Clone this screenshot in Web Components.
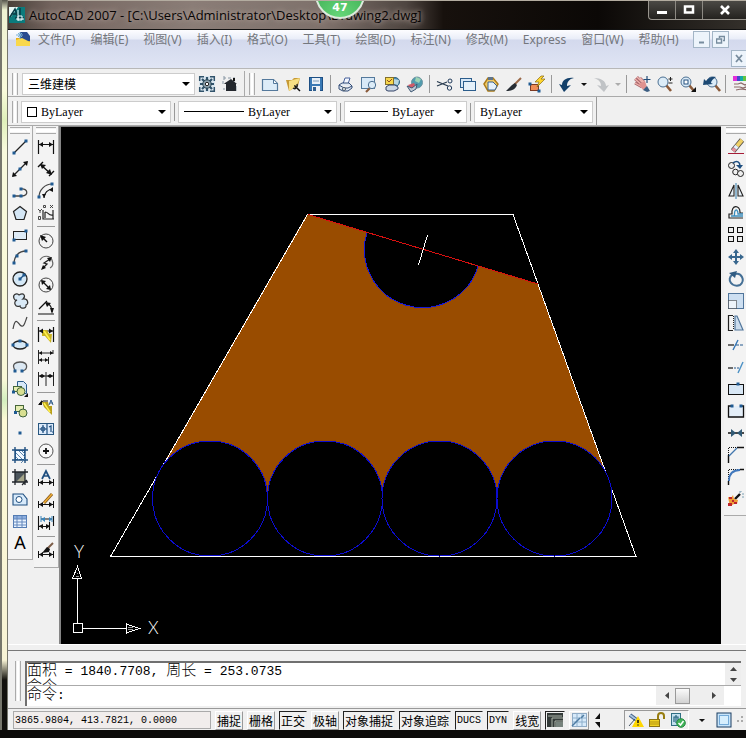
<!DOCTYPE html>
<html lang="zh-CN">
<head>
<meta charset="utf-8">
<title>AutoCAD 2007</title>
<style>
html,body{margin:0;height:100%;overflow:hidden}
body{font:12px "Liberation Sans","Noto Sans CJK SC",sans-serif;color:#000;background:#0b0a08}
</style>
</head>
<body>
<cad-window></cad-window>
<script>
const P = (d, s = '#111', w = 1, f = 'none') => `<path d="${d}" stroke="${s}" stroke-width="${w}" fill="${f}"/>`;
const F = (d, f = '#111') => `<path d="${d}" fill="${f}"/>`;
const R = (x, y, w, h, f = '#d7e8f8', s = '#2b5d8c') => `<rect x="${x}" y="${y}" width="${w}" height="${h}" fill="${f}" stroke="${s}"/>`;
const C = (x, y, r, f = '#d7e8f8', s = '#222') => `<circle cx="${x}" cy="${y}" r="${r}" fill="${f}" stroke="${s}"/>`;
const N = (...a) => { let o = ''; for (let i = 0; i < a.length; i += 2) o += `<rect x="${a[i] - 1.5}" y="${a[i + 1] - 1.5}" width="3" height="3" fill="#1f5a92"/>`; return o; };
const B = '#1f4f80';
const DIM = P('M.5 8v7M15.5 8v7M1 11.5h14') + F('M1 11.5l4-2.5v5zM15 11.5l-4-2.5v5z');
const LENS = (x, y) => P(`M${x + 3} ${y + 3}l5 6`, '#8a5a3a', 2.6) + C(x, y, 5, '#dcecf8', '#4b6f92');
const ICONS = {
  app: `<rect width="16" height="16" fill="#0b7b7c"/>` + F('M0 0h9L2 10 0 9z', '#e5f5f3') + P('M1 10L6 2l3 9M2 7h5M11 1v12M6 11h9', '#073d46', 1.5) + P('M9 3v11M7 12h8M9 9h4v4H9z', '#eefcff', 1),
  doc: F('M1 7h14v8H1z', '#e8af19') + F('M5 1h7l3 4v5L5 13z', '#2a4c8f') + F('M1 9l6-2 8 4v4H1z', '#f9d84c') + P('M5 1v7M1 4h7M3 2l4 4M7 2L3 6', '#7bb1d5'),
  gear: `<rect width="16" height="16" fill="#dbe7ef"/>` + P('M.7 5V.7H5M11 .7h4.300V5M15.300 11v4.300H11M5 15.300H.7V11', '#31536b', 1.5) + P('M3 3l10 10M13 3L3 13M8 1v14M1 8h14', '#31536b', 2.2) + C(8, 8, 4.2, '#8ea3af', '#23404f') + C(8, 8, 1.7, '#fff'),
  house: P('M2 2h2M6 2h3M12 1v5M1 5v3M14 10v5M1 13h2M2 0v4', '#8695a2') + F('M3 7l6-4 6 5h-1v7H4V8H2z', '#23272d') + F('M11 2h2v3h-2z', '#111'),
  newf: P('M.5 3.500h11l4 4v7H.5z', '#54799c', 1.2, '#ddecf8') + P('M11.500 4v3.500H15', '#54799c', 1, '#fff'),
  open: F('M1 4h6l2-2h6l-2 8-9 5z', '#c79a35') + F('M4 5l11-3-4 9-7 4z', '#f7df83') + P('M8 12c3 2 5-1 4-4', '#222', 1.5) + F('M9 9l3 1-2 3z') + P('M12 12l3 3', '#111', 1.5),
  save: R(1.5, 1.5, 13, 13, '#3979b5', '#1d4f84') + F('M4 2h8v6H4z', '#e7eff7') + F('M4 10h8v5H4z', '#eef2f6') + F('M5 11h3v4H5z', '#315f8f') + P('M5 5h6', '#7f9cb8'),
  print: P('M5 8L7 2h5l-2 6', '#46619b', 1, '#f5f8ff') + P('M1 9l3-2h7l3 3v2l-4 3H5l-4-2zM1 9l5 3h4l4-2', '#334d77', 1, '#dfe7f2') + C(6, 13, 1.5, '#fff', '#456'),
  preview: R(.5, 1.5, 13, 11, '#d8e9f8', '#54799c') + P('M9 12l-4 4', '#8a5a3a', 2.2) + C(11, 9, 3.7, '#dcecf8', '#4b6f92'),
  publish: C(11, 6, 4.5, '#4a8cb5', '#34637c') + F('M10 3l5 1-1 5-4-1z', '#b7d6e0') + R(1.5, 1.5, 8, 7, '#f6d64c', '#84702b') + P('M3 4l2 2 3-3', '#8d4b25') + P('M2 11l3-2h6l3 2v2l-4 2H4l-2-1z', '#344568', 1, '#cbd7e6'),
  globe: C(10, 6.5, 5.5, '#519cae', '#6d94a2') + F('M9 1l5 2-2 4-4-2z', '#9ed4b5') + F('M1 9l6-2 2 4-5 4z', '#d15a68') + P('M0 10l5 2 5-4-1 5-5 3z', '#405a75', 1, '#bec9d5'),
  cut: P('M0 5.500l11 4.500M0 10l10-4', '#283b4f', 1.3) + C(13, 5, 2, 'none', '#223c5c') + C(12.5, 12, 2.2, 'none', '#223c5c'),
  copy: R(.5, 2.5, 11, 9) + R(3.5, 5.5, 12, 9, '#e4f0fa'),
  paste: P('M1 8l4-6h5l5 6-4 7H5z', '#ac7b19', 1.5, '#f1ca65') + P('M5 6h5l4 4-2 4H5z', '#3a638d', 1, '#e5f1fa') + F('M5 1h5v3H5z', '#60758a'),
  brush: P('M15 2L8 9', '#9a6949', 2) + F('M9 7L6 9l-6 6c5 0 9-1 11-6z', '#272d34'),
  match: R(1.5, 8.5, 8, 6, '#f08d57', '#7d3a23') + N(1, 8, 10, 15) + P('M12 0L6 6h4l-2 5 8-8h-4l3-3z', '#886c16', .7, '#ffd52d'),
  undo: F('M5 16L0 8l3 1C3 4 8 1 15 2c-5 1-7 4-7 8l4-1z', '#123f69'),
  redo: F('M11 16l5-7-3 1c0-5-5-8-12-8 5 2 7 4 7 8l-4-1z', '#c0c3c6'),
  pan: P('M1 3l7 6M3 1l6 6M6 2l4 4M1 7l7 4', '#a8646b', 2.7) + P('M1 3l7 6M3 1l6 6M6 2l4 4M1 7l7 4', '#efb4ad', 1.4) + F('M5 8l6-3 2 6-4 3z', '#e0928f') + F('M9 14l4-4 3 5-3 1z', '#3c5e82') + P('M13 0v7M9.500 3.500h7', '#234c79', 1.2),
  zoompm: LENS(6, 6) + P('M11.500 3h4M13.500 1v4M11.500 7h4', '#222', 1),
  zoomwin: LENS(6, 6) + R(4, 4, 4, 4, '#fff', '#24517f') + F('M16 11v5h-5z'),
  zoomprev: LENS(9, 6) + F('M0 9l1-6 2 2c3-4 7-5 10-4-3 2-5 4-5 6l2 1z', '#1d4973'),
  palette: F('M0 0h4v5H0z', '#e12ed8') + F('M4 0h3v5H4z', '#4647d0') + F('M7 0h3v5H7z', '#14a9a7') + F('M10 0h3v5h-3z', '#64c440') + F('M13 0h3v5h-3z', '#e9b330') + P('M1 8h4l3-1 4 2 4-2M1 11h6l3 1 6-2M3 14l5-1 8 1', '#8b6a68', 1.2),
  line: P('M2 14L14 2', '#222', 1.2) + N(2, 14, 14, 2),
  xline: P('M1 15L15 1', '#222', 1.2) + F('M0 16l1-5 4 4zM16 0l-5 1 4 4z') + N(8, 8),
  pline: P('M1 13h9c7 0 6-8-1-7', '#444', 1.3) + N(2, 13, 9, 13, 9, 6),
  polygon: P('M8 1.500l6.500 5-2.500 8H4l-2.500-8z', '#222', 1.2, '#d4e6f5'),
  rect: R(1.5, 4.5, 13, 8, '#deebf6', '#222') + N(2, 13, 14, 4),
  arc: P('M2 15C2 7 7 2 14 2', '#444', 1.3) + N(2, 14, 5, 7, 14, 2),
  circle: `<circle cx="8" cy="8" r="7" fill="#d5e8f6" stroke="#222" stroke-width="1.3"/>` + P('M8 8l4-4', B, 1.2) + N(8, 8, 12, 4),
  cloud: P('M3 7C-1 2 5-1 7 2c5-3 7 1 4 4 5-1 6 5 3 6 1 4-6 4-6 1-5 2-7-4-3-6z', '#333', 1.2, '#d9e9f6'),
  spline: P('M1 14C3 3 5 6 8 10c4 4 5-3 7-8', '#444', 1.2),
  ellipse: `<ellipse cx="8" cy="8" rx="7" ry="4" fill="#d5e8f6" stroke="#222" stroke-width="1.3"/>` + N(1, 8, 15, 8, 8, 4),
  earc: P('M3 11C-1 5 4 3 8 3c9 0 8 8 2 9', '#555', 1.3, '#dce8f2') + N(3, 12, 10, 12),
  insert: P('M5.500 9V.5h6l3 3v9H9', '#2b5d8c', 1, '#d7e8f8') + R(1.5, 5.5, 8, 5, '#e7edb0', '#466639') + C(9, 10.5, 4, '#d8df91', '#3c603c') + N(1.5, 11) + F('M16 12v4h-4z'),
  block: R(3.5, 2.5, 8, 6, '#e5edb1', '#466639') + C(11, 10, 4, '#d8df91', '#3c603c') + N(3.5, 9.5),
  point: N(8, 8),
  hatch: R(3.5, 3.5, 9, 9, '#f2f8ff') + P('M3 0v16M13 0v16M0 3h16M0 13h16', B, 1.4) + P('M4 6l6 6M4 10l3 3M7 4l6 6M10 4l3 3M14 11l-5 5', '#4d7ba5', .9),
  gradient: F('M3 3h10v10H3z', '#4c555c') + F('M4 13L13 4v9z', '#a5a58a') + P('M3 0v16M13 0v16M0 3h16M0 13h16M15 11l-5 5', '#22262b', 1.3),
  region: P('M1 3h10l4 5v6H1z', B, 1.1, '#d8eafa') + C(7, 8.5, 3, '#fff', B),
  table: R(1.5, 2.5, 13, 12, '#eaf4ff', '#537bb2') + F('M2 3h12v3H2z', '#8daede') + P('M1 6h14M1 9h14M1 12h14M5 3v12M10 3v12', '#6588bd'),
  mtext: `<text x="8" y="14" text-anchor="middle" font-family="Noto Sans" font-size="18">A</text>`,
  dlin: P('M.5 1v14M15.5 1v14M1 5.500h14', '#111', 1.2) + F('M1 5.500l4-2.500v5zM15 5.500l-4-2.500v5z'),
  dali: P('M0 6l5-5M11 15l5-5M3 4l10 9', '#111', 1.4) + F('M2 3l6 1-4 4zM14 14l-6-2 4-4z'),
  darc: P('M1 14C1 7 7 1 14 1', '#444', 1.2) + P('M6 15c0-5 4-9 9-9', '#111', 1.2) + F('M4 11h4l-2 4zM15 4v5l-4-2z') + N(1, 14, 14, 1),
  dord: P('M5 5v9h11M7 7v6M7 7c4 0 3 4 8 3M15 5v9', '#222', 1.2) + P('M2 8V6L0 4M2 6l2-2M12 0l3 3M15 0l-3 3M.5 11.500h2v3h-2zM5.500 .5h2v2h-2z', '#333', .9),
  drad: C(8, 8, 7, 'none', '#444') + P('M9 9L4 4', '#111', 1.4) + F('M2 2l6 2-4 4z'),
  djog: P('M2 5c3-5 10-5 12 0s0 7-2 8', '#666', 1.2) + P('M5 13l4-4-3-1 6-4', '#222', 1.3) + F('M14 2L9 3l3 4zM3 15l2-5 3 3z'),
  ddia: C(8, 8, 7, 'none', '#444') + P('M4 4l8 8', '#111', 1.2) + F('M3 3l5 1-4 4zM13 13l-5-1 4-4z'),
  dang: P('M0 15h16M1 10L9 2M9 4c4 2 5 5 5 9', '#111', 1.2) + F('M7 3l6 1-4 4zM14 15l-2-6h4z'),
  quick: P('M.5 0v15M15.500 0v15M1 4h14', '#111', 1.2) + F('M4 3h5l2 4h3l-1 9-6-7H4z', '#c9b321') + P('M6 4l6 9', '#fff04b', 1.6) + F('M1 4l4-2.500v5zM15 4l-4-2.500v5z'),
  dbase: P('M.5 1v14M10.500 8v7M15 1v4M1 4h14M1 11h10', '#222', 1) + F('M1 4l3-2v4zM15 4l-3-2v4zM1 11l3-2v4zM10 11L7 9v4z'),
  dcont: P('M.5 1v14M8 1v14M15.500 1v14M1 5h14', '#222', 1) + F('M1 5l3-2v4zM7 5L4 3v4zM9 5l3-2v4zM15 5l-3-2v4z'),
  leader: P('M1 5l4-3h5', '#111') + F('M0 6l4-5v5z') + F('M4 3h6l1 4h3v9L6 8z', '#b89f1c') + P('M6 4l6 9', '#fff149', 1.5) + P('M11 6l2-5 2 5M12 4h3', B, .9),
  tol: R(.5, 2.5, 15, 11, '#dceafa', '#28567f') + P('M9 3v10M5 4v8M1.500 8h7M11 6l2-1v6', B, 1.2) + C(5, 8, 2, 'none', B) + P('M14 11h1', B, 1),
  center: C(8, 8, 7, '#f7f7f7', '#555') + P('M5 8h6M8 5v6', '#111', 1.8),
  dedit: DIM + P('M4 8l4-8 4 8M6 5h4', B, 1.7),
  dtedit: DIM + P('M6 10l8-9', '#83541d', 3) + P('M6 10l8-9', '#edae34', 1.6),
  dupd: P('M.5 1v14M15.500 1v10M11.500 7v8M1 11.500h11M3 4h11', '#111', 1.1) + F('M1 11l4-2v5zM12 11L8 9v5z') + F('M3 4l4-2v5zM14 4l-3-2v5z', '#3985bc') + P('M3 1v6M14 1v6', '#3985bc'),
  dstyle: DIM + P('M15 0L9 6', '#7c5d48', 2) + F('M9 4L4 10l7-1 1-3z'),
  erase: P('M0 14.500h16', '#a61c37') + P('M5 12L14 1', '#55504a', 5.500) + P('M9 7l5-6', '#efd065', 3.800) + P('M7 9.500l2-2.500', '#e5f0fa', 4) + P('M5 12l2-2.500', '#e4919c', 4.200),
  dcopy: C(3.5, 4.5, 3, '#eee') + C(7.5, 11, 2.8, '#eee') + C(12.5, 12.5, 3, '#eee') + P('M5 2c4-3 7-1 7 3', B, 1.6) + F('M8 4h7l-3 4z', B),
  mirror: P('M6 2v11H1zM10 2v11h5z', '#222', 1.1, '#e8f1f8') + P('M8 0v16', '#327eae'),
  offset: P('M15 13H1V9h3c-1-10 8-9 8-2v1h3', '#222', 1.2) + P('M15 11H3h3c1-1 0-3 1-5 1-2 3-1 3 3h5', '#3b8dbd', 1.3),
  array: R(.5, .5, 5, 5, '#eee', '#111') + R(9.5, .5, 5, 5, '#eee', '#111') + R(.5, 9.5, 5, 5, '#eee', '#111') + R(9.5, 9.5, 5, 5, '#eee', '#111'),
  move: P('M8 2v12M2 8h12', '#38678e', 2) + F('M8 0l3 4H5zM8 16l-3-4h6zM0 8l4-3v6zM16 8l-4-3v6z', '#38678e'),
  rotate: P('M5 3c-8 6 0 14 7 11 6-5 1-12-4-11', '#446f95', 2) + F('M1 2l8-2-2 7z', '#315c82'),
  scale: R(.5, .5, 15, 15, '#cddff1', '#50759b') + `<path d="M.5 7.500h8v8h-8z" fill="#eef4fa" stroke="#222" stroke-dasharray="1 1"/>`,
  stretch: P('M5 .5H.5v15H5', '#222', 1.2) + `<path d="M5.500 1v14" stroke="#222" stroke-dasharray="1 1"/>` + P('M7 15V1h2l6 14z', '#52779c', 1.2, '#cbdced'),
  trim: P('M0 8h6', '#111', 1.2) + P('M5 13L10 3', '#3475b5', 1.4) + `<path d="M8 8h8" stroke="#24588e" stroke-dasharray="3 1"/>`,
  extend: P('M0 9h5', '#111', 1.2) + `<path d="M6 9h6" stroke="#24588e" stroke-dasharray="2 1"/>` + P('M10 14l5-11', '#4b91c5', 1.4),
  breakpt: R(.5, 3.5, 15, 10, '#d8e7f5', '#111') + N(10, 3),
  break2: P('M3 3H.5v11h15V3H13', '#111', 1.3, '#e4eef8') + N(4, 3, 13, 3),
  join: P('M0 8h16', '#111', 1.5) + F('M3 4l5 4-5 4zM14 4L9 8l5 4z', '#315a76'),
  chamfer: P('M.5 16V8M9 .5h7', '#111', 1.4) + `<path d="M.5 8V.5H9" fill="none" stroke="#111" stroke-dasharray="1 1"/>` + P('M1 9l8-8', '#4277ae', 1.3),
  fillet: P('M.5 16v-4M12 .5h4', '#111', 1.4) + `<path d="M.5 12V.5H12" fill="none" stroke="#111" stroke-dasharray="1 1"/>` + P('M1 12C1 5 5 1 12 1', '#4078bd', 1.8),
  explode: P('M7 8l5-5', '#111', 2.4) + F('M0 6l3 1 2-3 1 4 4 1-1 4-3 0-4 2-1-4z', '#ef9c36') + F('M1 6h3v2H1zM4 9h2v2H4zM0 12h4v3H0zM6 11h3v2H6z', '#bd252d') + P('M11 1h2M15 2v2M14 6h2M13 0v1', '#7da0b3'),
  model: `<rect width="16" height="14" y="1" fill="#333a38"/>` + P('M1 4h14M5 15V6h11M8 15V9h8', '#aeb5aa') + F('M9 10h7v5H9z', '#77837d'),
  grid: R(1.5, 1.5, 14, 13, '#d7eafa', '#8faac4') + P('M1 6h14M1 10h14M6 1v14M11 1v14', '#8eafcb') + P('M1 14L9 6M13 3l-3 3', '#4e7ca2', 1.5),
  spinner: F('M4 7l5-6v6zM4 10h5v6z'),
  warn: P('M2 3l8 6', '#425e85', 4) + P('M2 3l8 6', '#a8c4df', 2) + P('M1 14l6-7', '#456', 1) + F('M10 4l6 11H4z', '#ffd700') + P('M10 8v3M10 12.500v1', '#111', 1.5),
  lock: P('M9 8V4c0-4 6-4 6 0v3', '#977d10', 2) + R(.5, 7.5, 10, 7, '#f2d423', '#8b7415') + P('M1 10h9M1 12h9', '#b39312'),
  check: R(1.5, 1.5, 9, 12, '#c3e0ef', '#306f84') + P('M4 10V5h4v3M6 3v8', '#27637e', 1.2) + C(11, 11, 4.3, '#42b45a', '#268a42') + P('M8.500 11l2 2 3-4', '#fff', 1.5),
  clean: R(1, 1, 14, 14, '#c7e4fa', '#1b3c60') + R(3.5, 3.5, 9, 9, '#d6eefd', '#74aad8'),
  down: F('M5 7h6l-3 3z')
};
const icon = n => `<svg viewBox="0 0 16 16" width="16" height="16" aria-hidden="true">${ICONS[n]}</svg>`;

class Base extends HTMLElement {
  connectedCallback() {
    if (this.shadowRoot) return;
    this.attachShadow({ mode: 'open' }).innerHTML =
      `<style>:host,*{box-sizing:border-box}button,input,select{font:inherit;color:inherit;margin:0;padding:0;border:0;border-radius:0;background:none;outline:0}svg{display:block}${this.css()}</style>${this.html()}`;
  }
  attr(n, d = '') { return this.getAttribute(n) ?? d; }
}
const define = (n, css, html) => customElements.define(n, class extends Base {
  css() { return css; }
  html() { return typeof html === 'function' ? html(this) : html; }
});

define('tool-button', `:host{display:block;flex:none;width:var(--tw,23px);height:var(--th,22px)}:host([narrow]){width:11px}
button{width:100%;height:100%;display:flex;align-items:center;justify-content:center}svg{flex:none;overflow:visible}:host([faded]) svg{opacity:.3}`,
  e => `<button aria-label="${e.attr('icon')}">${icon(e.attr('icon'))}</button>`);

define('tool-grip', `:host{display:block;flex:none;width:6px;height:22px;border:solid #aaa;border-width:0 1px;padding:0 1px}
:host([flat]){width:20px;height:7px;border-width:1px 0;padding:1px 0}div{height:100%;background:#fff}`, '<div></div>');

define('tool-sep', `:host{display:block;flex:none;width:7px;height:18px;padding:0 3px}
:host([flat]){width:18px;height:6px;padding:2px 0}div{background:#999;width:1px;height:100%}:host([flat]) div{width:100%;height:1px}`, '<div></div>');

define('tool-strip', `:host{display:flex;flex-direction:column;align-items:center;flex:none;width:25px;padding:1px 0 5px;gap:2px;border:solid #aaa;border-width:0 1px 1px 0;background:#f3f3f3;--tw:24px}
.list{display:flex;flex-direction:column;align-items:center}`,
  e => `<tool-grip flat></tool-grip><div class="list">${e.attr('icons').split(' ').map(n => n === '|' ? '<tool-sep flat></tool-sep>' : `<tool-button icon="${n}"></tool-button>`).join('')}</div>`);

define('combo-box', `:host{display:block;min-width:0}label{display:flex;align-items:center;height:22px;background:#fff;border:1px solid #ccc;padding:0 4px 0 5px;gap:4px}
select{appearance:none;flex:1;min-width:0;height:20px}i{flex:none;border:solid transparent;border-width:4px 4px 0;border-top-color:#000}
.box{flex:none;width:10px;height:10px;border:1px solid #000}.rule{flex:none;height:1px;background:#000;width:var(--rule,60px)}`,
  e => `<label>${e.hasAttribute('box') ? '<span class="box"></span>' : ''}${e.hasAttribute('rule') ? '<span class="rule"></span>' : ''}<select aria-label="${e.attr('name')}"><option>${e.attr('value')}</option></select><i></i></label>`);

define('title-bar', `:host{display:flex;position:relative;flex:none;height:30px;align-items:flex-start;padding-left:1px;overflow:hidden;background:linear-gradient(90deg,#494039,#74655f 6%,#8b7d77 25%,#7e716b 43%,#4e4540 54%,#17110d 59%,#0b0806 80%,#34302b);border-top:1px solid #b3aca0;border-bottom:1px solid #111}
.logo{margin-top:6px}h1{font:13px "Open Sans","Noto Sans",sans-serif;line-height:28px;margin:0 0 0 4px;flex:1;white-space:nowrap;min-width:0;color:#080505;text-shadow:0 0 5px #b3a39c,0 0 8px #a89992}
.badge{position:absolute;left:307px;top:-32px;width:50px;height:50px;border-radius:25px;border:2px solid #dceadd;background:radial-gradient(circle at 50% 100%,#66d779,#2f9c45);color:#fff;font:bold 11px/14px "DejaVu Sans",sans-serif;text-align:center;padding-top:30px}
.win{display:flex;height:19px;border:1px solid #99958e;border-top:0;border-right:0;border-radius:0 0 0 4px;background:linear-gradient(#4b4945,#24221f);margin-right:-1px}
.win button{width:27px;height:18px;display:flex;align-items:center;justify-content:center;border-right:1px solid #8c8983}.win button:last-child{width:44px}`,
  `<span class="logo">${icon('app')}</span><h1>AutoCAD 2007 - [C:\\Users\\Administrator\\Desktop\\Drawing2.dwg]</h1><span class="badge">47</span>
<div class="win"><button aria-label="minimize"><svg width="12" height="10"><path d="M1 6h10v3H1z" fill="#fff"/></svg></button><button aria-label="maximize"><svg width="12" height="10"><path d="M2 1.500h8v6H2z" fill="none" stroke="#fff" stroke-width="2.500"/></svg></button><button aria-label="close"><svg width="12" height="10"><path d="M2 1l8 8M10 1L2 9" stroke="#fff" stroke-width="2.600"/></svg></button></div>`);

define('menu-bar', `:host{display:flex;flex:none;height:39px;padding:1px 0 0 7px;background:linear-gradient(#fdfdff,#e9edf8 9px,#d3d9ed 10px,#e0e5f4);border-bottom:1px solid #b8b8b8;color:#74777d;font:12px/18px "Noto Sans","Noto Sans CJK SC",sans-serif}
nav{display:flex;flex:1;gap:15px;height:18px;min-width:0}button{white-space:nowrap}.doc{margin-right:-8px}
.mdi{display:grid;grid-template-columns:repeat(3,17px);grid-auto-rows:17px;gap:2px;flex:none;margin-right:-2px}.mdi button{border:1px solid #a3b5c6;background:#edf4fb;display:flex;align-items:center;justify-content:center}.mdi button:last-child{grid-area:2/3}`,
  `<nav><span class="doc">${icon('doc')}</span>${['文件(F)', '编辑(E)', '视图(V)', '插入(I)', '格式(O)', '工具(T)', '绘图(D)', '标注(N)', '修改(M)', 'Express', '窗口(W)', '帮助(H)'].map(t => `<button>${t}</button>`).join('')}</nav>
<div class="mdi"><button aria-label="minimize drawing"><svg width="9" height="9"><path d="M2 7.500h5" stroke="#778c9e" stroke-width="2"/></svg></button><button aria-label="restore drawing"><svg width="9" height="9"><path d="M3.500 3V1.500h5v4H7M.5 4h5v4h-5z" fill="none" stroke="#778c9e" stroke-width="1.500"/></svg></button><button aria-label="close drawing"><svg width="9" height="9"><path d="M1 1l6 7M7 1L1 8" stroke="#778c9e" stroke-width="1.800"/></svg></button></div>`);

define('standard-bar', `:host{display:flex;flex:none;height:28px;align-items:center;padding:2px 0 0 4px;border-bottom:1px solid #aaa;font:12px "Noto Sans CJK SC",sans-serif;overflow:hidden}
combo-box{flex:none;width:173px;margin-left:4px}.end{flex:none;width:1px;height:26px;background:#aaa;margin:0 4px 0 3px}.tools{display:flex;align-items:center;flex:none;margin-left:3px}`,
  `<tool-grip></tool-grip><combo-box name="workspace" value="三维建模"></combo-box><tool-button icon="gear"></tool-button><tool-button icon="house"></tool-button><span class="end"></span><tool-grip></tool-grip><div class="tools">${'newf open save | print preview publish globe | cut copy paste brush match | undo down redo downf | pan zoompm zoomwin zoomprev | palette'.split(' ').map(n => n === '|' ? '<tool-sep></tool-sep>' : n.startsWith('down') ? `<tool-button narrow icon="down"${n === 'downf' ? ' faded' : ''}></tool-button>` : `<tool-button icon="${n}"></tool-button>`).join('')}</div>`);

define('property-bar', `:host{display:flex;flex:none;height:29px;font:12px "Liberation Serif","Noto Sans CJK SC",serif;background:#f0f0f0;border-bottom:1px solid #aaa}
.bar{display:flex;align-items:center;padding:1px 3px 0 4px;border-right:1px solid #999}.bar combo-box{flex:none}tool-grip{margin-right:3px}
.c{width:150px}.l{width:159px}.w{width:123px;--rule:38px}.p{width:119px}`,
  `<div class="bar"><tool-grip></tool-grip><combo-box class="c" name="color" value="ByLayer" box></combo-box><tool-sep></tool-sep><combo-box class="l" name="linetype" value="ByLayer" rule></combo-box><tool-sep></tool-sep><combo-box class="w" name="lineweight" value="ByLayer" rule></combo-box><tool-sep></tool-sep><combo-box class="p" name="plot style" value="ByLayer"></combo-box></div>`);

define('drawing-canvas', `:host{display:block;flex:1;min-width:0;background:#000;border:solid #858585;border-width:1px 0 0 2px;overflow:hidden}svg{width:100%;height:100%}
text{font:300 17px Lato,"Liberation Sans",sans-serif;fill:#fff}`,
  `<svg role="img" aria-label="drawing"><g transform="translate(-61,-127)" fill="none" shape-rendering="crispEdges">
<path d="M307 214L538 284 604 468 555 498H210L162 466z" fill="#994c00"/>
<path d="M307.500 214.500H513L636 556.500H110.500z" stroke="#fff"/>
<path d="M367 232.500A58 58 0 0 0 478 266.500z" fill="#000"/><path d="M367 232.500A58 58 0 0 0 478 266.500" stroke="#1616d8"/>
<g fill="#000" stroke="#0c0cd0"><circle cx="210" cy="498.500" r="57.500"/><circle cx="325" cy="498.500" r="57.500"/><circle cx="439.500" cy="498.500" r="57.500"/><circle cx="554.500" cy="498.500" r="57.500"/></g>
<path d="M110 556.500H208M213 556.500H323M328 556.500H437M442 556.500H552M557 556.500H636" stroke="#fff"/>
<path d="M308 214.500L538 284" stroke="#d91010"/><path d="M427.500 235L418.500 265" stroke="#fff"/>
<g stroke="#fff"><path d="M73.500 623.500h9v9h-9zM77.500 623V578M72.500 578.500h9l-4-12zM83 628.500h43M126.500 624v9l13-4.500z"/><path d="M76 576h3M77 573h1M128 627h5M128 629h5" stroke="#999"/></g>
<g shape-rendering="auto"><text x="148" y="634">X</text><text x="74" y="558">Y</text></g></g></svg>`);

define('command-panel', `:host{display:flex;flex:none;height:58px;border-top:1px solid #777;padding:10px 5px 2px 7px;gap:4px;font:13px/17px "Liberation Mono","Noto Sans CJK SC",monospace}
tool-grip{height:40px}.box{flex:1;min-width:0;border:solid #707070;border-width:2px 0 0 2px;background:#fff}.cjk{font-size:15px;font-weight:300}
.log{display:flex;height:23px;border-bottom:1px solid #aaa}.lines{flex:1;height:22px;overflow:hidden;white-space:pre}.lines div{height:16px;line-height:17px}
.vs{width:16px;background:#eee;display:flex;flex-direction:column;align-items:center;justify-content:space-around}
.row{display:flex;height:19px}label{flex:none;align-self:center}input{flex:1;min-width:0}.hs{display:flex;flex:none;width:68px;margin-right:17px;background:#eee;justify-content:space-between;align-items:center;padding:0 7px}
.hs b{width:15px;height:16px;border:1px solid #999;background:linear-gradient(#fafafa,#d2d2d2);margin-right:16px}
button{width:7px;height:8px;display:grid;place-items:center}`,
  `<tool-grip></tool-grip><div class="box"><div class="log"><div class="lines"><div><span class="cjk">面积</span> = 1840.7708, <span class="cjk">周长</span> = 253.0735</div><div class="cjk">命令</div></div><div class="vs"><button aria-label="scroll up"><svg width="7" height="4"><path d="M0 4l3.500-4L7 4z" fill="#444"/></svg></button><button aria-label="scroll down"><svg width="7" height="4"><path d="M0 0l3.500 4L7 0z" fill="#444"/></svg></button></div></div>
<div class="row"><label for="cmd"><span class="cjk">命令</span>:</label><input id="cmd"><div class="hs"><button aria-label="scroll left"><svg width="4" height="7"><path d="M4 0L0 3.500 4 7z" fill="#444"/></svg></button><b></b><button aria-label="scroll right"><svg width="4" height="7"><path d="M0 0l4 3.500L0 7z" fill="#444"/></svg></button></div></div></div>`);

define('status-toggle', `:host{display:block;flex:none}button{display:block;height:19px;padding:0 1px;line-height:17px;border:1px solid #fff;border-right-color:#999;border-bottom-color:#999;white-space:nowrap}
:host([on]) button{border:1px solid #222;border-right-color:#eee;border-bottom-color:#eee}`,
  e => `<button aria-pressed="${e.hasAttribute('on')}">${e.hasAttribute('icon') ? icon(e.attr('icon')) : e.textContent}</button>`);

define('status-bar', `:host{display:flex;flex:none;height:22px;align-items:center;gap:4px;padding:1px 3px 0 5px;border-top:1px solid #999;font:12px "Noto Sans CJK SC",sans-serif;--tw:21px;--th:18px}
output{flex:none;display:block;width:198px;height:18px;border:1px solid #aaa;background:#f1edec;padding-left:1px;font:10px/17px "Liberation Mono",monospace;white-space:nowrap}
.m{font:10px "Liberation Mono",monospace}.sp{flex:1}.tray{display:flex;border:1px solid #999;border-right-color:#fff;border-bottom-color:#fff}.last{--tw:18px}`,
  `<output>3865.9804, 413.7821, 0.0000</output><status-toggle>捕捉</status-toggle><status-toggle>栅格</status-toggle><status-toggle on>正交</status-toggle><status-toggle>极轴</status-toggle><status-toggle on>对象捕捉</status-toggle><status-toggle on>对象追踪</status-toggle><status-toggle on class="m">DUCS</status-toggle><status-toggle on class="m">DYN</status-toggle><status-toggle>线宽</status-toggle><status-toggle on icon="model"></status-toggle><status-toggle icon="grid"></status-toggle><tool-button narrow icon="spinner"></tool-button><span class="sp"></span><div class="tray"><tool-button icon="warn"></tool-button><tool-button icon="lock"></tool-button><tool-button icon="check"></tool-button></div><tool-button class="last" icon="down"></tool-button><tool-button class="last" icon="clean"></tool-button><svg width="6" height="8"><path d="M4 1h2M4 5h2M0 5h2" stroke="#aaa" stroke-width="2"/></svg>`);

define('cad-window', `:host{display:flex;height:100vh;padding-bottom:8px;background:linear-gradient(#0b0a08,#0b0a08)}
.edge{flex:none;width:8px;background:linear-gradient(#55544c,#eff2d2 10px,#fafbdc 90px,#dff0bb 120px,#f8f9dc 150px,#f9f8d8 380px,#d3eebf 400px,#fdf9d6 420px,#f7f3d5 660px,#12110d 680px);border:solid #77776c;border-width:0 1px 0 2px}
.app{display:flex;flex-direction:column;flex:1;min-width:0;background:#f0f0f0;overflow:hidden}
.work{display:flex;flex:1;min-height:0;align-items:flex-start}.work drawing-canvas{align-self:stretch}.gap{flex:none;height:6px;border-top:1px solid #fff}
.right{flex:none;width:25px;padding-left:3px;overflow:hidden}.second{margin-left:1px}`,
  `<div class="edge"></div><div class="app"><title-bar></title-bar><menu-bar></menu-bar><standard-bar></standard-bar><property-bar></property-bar>
<div class="work"><tool-strip icons="line xline pline polygon rect arc circle cloud spline ellipse earc insert block point hatch gradient region table mtext"></tool-strip><tool-strip class="second" icons="dlin dali darc dord | drad djog ddia dang | quick dbase dcont | leader tol center | dedit dtedit dupd | dstyle"></tool-strip><drawing-canvas></drawing-canvas><div class="right"><tool-strip icons="erase dcopy mirror offset array move rotate scale stretch trim extend breakpt break2 join chamfer fillet explode"></tool-strip></div></div>
<div class="gap"></div><command-panel></command-panel><status-bar></status-bar></div>`);
</script>
</body>
</html>
